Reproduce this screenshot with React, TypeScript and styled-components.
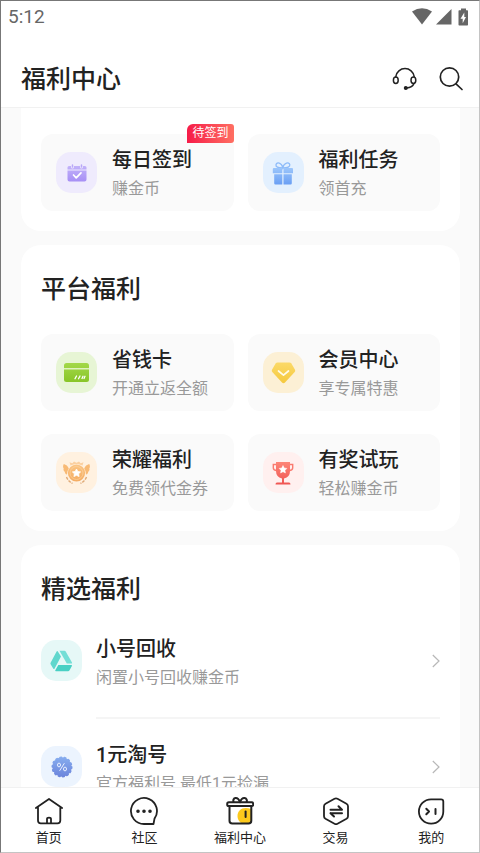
import React from "react";
import styled, { createGlobalStyle } from "styled-components";

const GlobalStyle = createGlobalStyle`
  *, *::before, *::after { box-sizing: border-box; }
  body {
    margin: 0;
    background: #fafafa;
    color: #222;
    font-family: Roboto, "Noto Sans CJK SC", sans-serif;
  }
  button { font: inherit; color: inherit; background: none; border: 0; padding: 0; text-align: left; cursor: pointer; }
  a { color: inherit; text-decoration: none; }
  h1, h2, p, ul { margin: 0; padding: 0; }
  svg { display: block; flex: none; }
`;

const Screen = styled.div`
  height: 100vh;
  display: flex;
  flex-direction: column;
  border: 1px solid #777;
  border-right-color: #c4c4c4;
  border-bottom-color: #c4c4c4;
`;

const StatusBar = styled.div`
  display: flex;
  align-items: center;
  justify-content: space-between;
  height: 31px;
  padding: 0 7px;
  background: #fff;
  color: #666;
  font-size: 19px;
`;

const StatusIcons = styled.div`
  display: flex;
  align-items: center;
  gap: 4px;
`;

const Header = styled.header`
  display: flex;
  align-items: center;
  justify-content: space-between;
  height: 76px;
  padding: 18px 15px 0 20px;
  background: #fff;
  border-bottom: 1px solid #f1f1f1;
`;

const PageTitle = styled.h1`
  padding-top: 2px;
  font-size: 25px;
  line-height: 36px;
  font-weight: 500;
`;

const HeaderActions = styled.div`
  display: flex;
  gap: 20px;
`;

const Content = styled.main`
  flex: 1;
  min-height: 0;
  overflow-y: auto;
  scrollbar-width: none;
  display: flex;
  flex-direction: column;
  gap: 14px;
  padding: 0 19px 0 20px;
`;

const Card = styled.section<{ $continued?: boolean }>`
  flex: none;
  padding: 26px 20px 20px;
  background: #fff;
  border-radius: ${(p) => (p.$continued ? "0 0 20px 20px" : "20px")};
`;

const SectionTitle = styled.h2`
  margin-bottom: 25px;
  font-size: 25px;
  line-height: 38px;
  font-weight: 500;
`;

const TileGrid = styled.div`
  display: grid;
  grid-template-columns: 1fr 1fr;
  gap: 23px 14px;
`;

const Label = styled.span`
  display: flex;
  flex-direction: column;
  flex: 1;
  min-width: 0;
  white-space: nowrap;
`;

const Tile = styled.button`
  position: relative;
  display: flex;
  align-items: center;
  gap: 15px;
  height: 77px;
  padding: 0 15px;
  background: #fafafa;
  border-radius: 12px;

  ${Label} {
    padding-top: 3px;
  }
`;

const Badge = styled.span`
  position: absolute;
  top: -10px;
  right: 0;
  padding: 0 5px;
  font-size: 12px;
  line-height: 19px;
  color: #fff;
  background: linear-gradient(90deg, #f61c48, #ff6f62);
  border-radius: 6px 3px 3px 0;
`;

const IconBox = styled.span<{ $tint: string }>`
  display: flex;
  align-items: center;
  justify-content: center;
  flex: none;
  width: 41px;
  height: 41px;
  border-radius: 15px;
  background: ${(p) => p.$tint};
`;

const Name = styled.span`
  font-size: 20px;
  line-height: 28px;
  font-weight: 500;
`;

const Note = styled.span`
  font-size: 16px;
  line-height: 29px;
  color: #999;
`;

const List = styled.ul`
  list-style: none;
`;

const Row = styled.button`
  display: flex;
  align-items: flex-start;
  gap: 14px;
  width: 100%;
  height: 106px;
`;

const RowBody = styled.span`
  display: flex;
  align-items: flex-start;
  flex: 1;
  height: 85px;
  padding-top: 1px;
  border-bottom: 2px solid #f5f5f5;
`;

const RowIcon = styled.span`
  padding-top: 6px;
`;

const RowArrow = styled.span`
  padding-top: 19px;
`;

const NavBar = styled.nav`
  display: flex;
  height: 65px;
  padding-top: 9px;
  background: #fff;
  border-top: 1px solid #f1f1f1;
`;

const NavLink = styled.a`
  display: flex;
  flex-direction: column;
  align-items: center;
  flex: 1;
  gap: 3px;
  font-size: 13px;
  line-height: 20px;
`;

const CalendarIcon = () => (
  <svg width="20" height="18" viewBox="0 0 20 18">
    <defs>
      <linearGradient id="calendar" x2="0" y2="1"><stop stopColor="#c2b2fa" /><stop offset="1" stopColor="#a78ff5" /></linearGradient>
    </defs>
    <path d="M2 2H18Q19.500 2 19.500 3.500V5.500H.5V3.500Q.5 2 2 2ZM.5 6.500H19.500V15.500Q19.500 17.500 17.500 17.500H2.500Q.5 17.500.5 15.500Z" fill="url(#calendar)" />
    <path d="M5.500 1V3M14.500 1V3" stroke="#efebfd" strokeWidth="3" strokeLinecap="round" />
    <path d="M5.500 1V3M14.500 1V3" stroke="#b9a7f8" strokeWidth="1.500" strokeLinecap="round" />
    <path d="M6.500 11L9.200 13.800L14 8.800" fill="none" stroke="#fff" strokeWidth="1.700" strokeLinecap="round" strokeLinejoin="round" />
  </svg>
);

const PresentIcon = () => (
  <svg width="22" height="24" viewBox="0 0 22 24">
    <defs>
      <linearGradient id="present" x2="0" y2="1"><stop stopColor="#9cc6fb" /><stop offset="1" stopColor="#6a9ff4" /></linearGradient>
    </defs>
    <path d="M10.500 7C6 7 3.500 5.800 4 3.600C4.800.8 9.500 1.400 10.800 6.500C12.200 1.400 17 .8 17.800 3.600C18.200 5.800 15.500 7 11 7" fill="none" stroke="#8dbbf9" strokeWidth="1.300" />
    <path d="M1.800 7H10.300V12.300H.8V8Q.8 7 1.800 7ZM11.500 7H20Q21 7 21 8V12.300H11.500ZM2.200 13.300H10.300V23.500H3.400Q2.200 23.500 2.200 22.300ZM11.500 13.300H19.800V22.300Q19.800 23.500 18.600 23.500H11.500Z" fill="url(#present)" />
  </svg>
);

const CardIcon = () => (
  <svg width="25" height="19" viewBox="0 0 25 19">
    <defs>
      <linearGradient id="card" x2="0" y2="1"><stop stopColor="#a3d84a" /><stop offset="1" stopColor="#88c527" /></linearGradient>
    </defs>
    <rect width="25" height="19" rx="2.500" fill="url(#card)" />
    <path d="M0 5.800H25" stroke="#f0fadf" strokeWidth="1.200" />
    <path d="M11 15.800L12.500 13M14.500 15.800L16 13M18 15.500L19 13.300M20 15.500L21 13.300" stroke="#fff" strokeWidth="1.300" strokeLinecap="round" />
  </svg>
);

const DiamondIcon = () => (
  <svg width="25" height="22" viewBox="0 0 25 22">
    <defs>
      <linearGradient id="diamond" x2="0" y2="1"><stop stopColor="#fbd968" /><stop offset="1" stopColor="#f5c93e" /></linearGradient>
    </defs>
    <path d="M6.500 .5H18.500Q19.700 .5 20.400 1.400L24 7.800Q24.600 9 23.700 10L14 20.500Q12.500 22 11 20.500L1.300 10Q.4 9 1 7.800L4.600 1.400Q5.300 .5 6.500 .5Z" fill="url(#diamond)" />
    <path d="M7.500 9L12.500 13.200L17.500 9" fill="none" stroke="#fffbe9" strokeWidth="1.700" strokeLinecap="round" strokeLinejoin="round" />
  </svg>
);

const HonorIcon = () => (
  <svg width="29" height="24" viewBox="0 0 29 24">
    <defs>
      <linearGradient id="honor" x2="0" y2="1"><stop stopColor="#fbc584" /><stop offset="1" stopColor="#f4ac62" /></linearGradient>
    </defs>
    <path d="M1.800 3C4 3.600 6 5.200 6.800 7.500Q5 10 5 13.500C3.500 13 2.800 12 2.900 10.900C1.500 10 1.200 8.800 1.700 7.600C.8 6 .9 4.500 1.800 3ZM27.200 3C25 3.600 23 5.200 22.200 7.500Q24 10 24 13.500C25.500 13 26.200 12 26.100 10.900C27.500 10 27.800 8.800 27.300 7.600C28.200 6 28.100 4.500 27.200 3Z" fill="#f8ba75" />
    <path d="M7.500 1.200L10.300 2.300L12 .5L14.500 1.800L17 .5L18.700 2.300L21.500 1.200L20.500 4.500Q14.500 1.300 8.500 4.500Z" fill="#fbd0a0" />
    <circle cx="14.500" cy="12" r="8.600" fill="url(#honor)" />
    <circle cx="14.500" cy="12" r="6.500" fill="none" stroke="#fbd3a0" strokeWidth=".7" />
    <path d="M14.500 8L15.800 10.500L18.600 10.900L16.600 12.800L17.100 15.600L14.500 14.300L11.900 15.600L12.400 12.800L10.400 10.900L13.200 10.500Z" fill="#fff" stroke="#fff" strokeWidth=".8" strokeLinejoin="round" />
    <path d="M4.500 16Q6 20 10.500 22.500M24.500 16Q23 20 18.500 22.500" fill="none" stroke="#e0ab78" strokeWidth="1.400" strokeDasharray="3 1" />
  </svg>
);

const TrophyIcon = () => (
  <svg width="22" height="24" viewBox="0 0 22 24">
    <defs>
      <linearGradient id="trophy" x2="0" y2="1"><stop stopColor="#fd8577" /><stop offset="1" stopColor="#ef5552" /></linearGradient>
    </defs>
    <path d="M4 3.500H1.300V7Q1.300 9.300 4.800 9.500M18 3.500H20.700V7Q20.700 9.300 17.200 9.500" fill="none" stroke="#fa7b70" strokeWidth="1.400" />
    <path d="M4 1H18V10Q18 16 12 17.500V21.500H17Q18.500 21.500 18.500 23.500H3.500Q3.500 21.500 5 21.500H10V17.500Q4 16 4 10Z" fill="url(#trophy)" />
    <path d="M11 4.500L12.200 7L14.900 7.400L13 9.300L13.400 12L11 10.700L8.600 12L9 9.300L7.100 7.400L9.800 7Z" fill="#fff" stroke="#fff" strokeWidth=".5" strokeLinejoin="round" />
  </svg>
);

const RecycleIcon = () => (
  <svg width="23" height="22" viewBox="0 0 23 22">
    <path d="M7.700 1.300L11 6.500L4.500 18.800Q3.800 19.500 3.200 18.500L.6 14.300Q.2 13.600.6 12.800L6.600 1.600Q7.100.6 7.700 1.300Z" fill="#60d7cd" />
    <path d="M9.500 .7H14.500Q15.300.7 15.700 1.400L22 12.500Q22.500 13.600 21.500 13.600H16.800Z" fill="#74ded6" />
    <path d="M8.300 15H21.200Q22.400 15 21.900 16L19.400 20.400Q19 21.200 18.100 21.200H6Q4.800 21.200 5.300 20.200Z" fill="#48d0c4" />
  </svg>
);

const PercentIcon = () => (
  <svg width="22" height="22" viewBox="0 0 22 22">
    <defs>
      <linearGradient id="percent" x2="0" y2="1"><stop stopColor="#86acee" /><stop offset="1" stopColor="#6c85dc" /></linearGradient>
    </defs>
    <circle cx="11" cy="11" r="9.700" fill="url(#percent)" />
    <circle cx="11" cy="11" r="9.500" fill="none" stroke="url(#percent)" strokeWidth="2" strokeLinecap="round" strokeDasharray="1.200 3.060" />
    <path d="M8.800 14.500L13.200 7.500" stroke="#e9f0ff" strokeWidth="1" strokeLinecap="round" />
    <ellipse cx="8" cy="9" rx="1.500" ry="1.900" fill="none" stroke="#e9f0ff" />
    <ellipse cx="14" cy="13" rx="1.500" ry="1.900" fill="none" stroke="#e9f0ff" />
  </svg>
);

const ChevronIcon = () => (
  <svg width="8" height="14" viewBox="0 0 8 14" fill="none" stroke="#b8b8b8" strokeWidth="1.200">
    <path d="M.8 1L7 7L.8 13" />
  </svg>
);

const stroke = { fill: "none", stroke: "#222", strokeWidth: 1.8, strokeLinecap: "round", strokeLinejoin: "round" } as const;

const HeadsetIcon = () => (
  <svg width="26" height="26" viewBox="0 0 26 26" {...stroke} strokeWidth="1.500">
    <path d="M3.800 11V10.500A9.300 9.300 0 0 1 22.200 10.500V11" />
    <ellipse cx="3.800" cy="14.300" rx="2.400" ry="3.200" />
    <ellipse cx="21.400" cy="14.300" rx="2.400" ry="3.200" />
    <path d="M22 17.500Q20.500 21.600 14.500 22" />
    <circle cx="13.800" cy="22" r="1.300" fill="#222" />
  </svg>
);

const SearchIcon = () => (
  <svg width="26" height="26" viewBox="0 0 26 26" {...stroke} strokeWidth="1.700">
    <circle cx="11.500" cy="11" r="9.200" />
    <path d="M18 17.800L24 23.500" />
  </svg>
);

const HomeIcon = () => (
  <svg width="28" height="28" viewBox="0 0 28 28" {...stroke}>
    <path d="M.9 11L14 2L27.100 11M3 10V23.500Q3 26.300 5.800 26.300H22.500Q25.300 26.300 25.300 23.500V10" />
    <path d="M12 26V22Q12 20.600 14 20.600Q16 20.600 16 22V26" />
  </svg>
);

const ChatIcon = () => (
  <svg width="28" height="28" viewBox="0 0 28 28" {...stroke}>
    <path d="M14 27A13 13 0 1 1 24.500 21.600L23.500 27Z" />
    <path d="M8 14.300H8.010M14 14.300H14.010M20 14.300H20.010" strokeWidth="3.600" />
  </svg>
);

const GiftIcon = () => (
  <svg width="28" height="28" viewBox="0 0 28 28" {...stroke}>
    <path d="M25 12C17 9 11.500 13 11.500 19C11.500 23 14 26 17 26.500H22Q25 26.500 25 23.500Z" fill="#fcc91c" stroke="none" />
    <path d="M3.500 9V23.800Q3.500 26.600 6.300 26.600H22.500Q25.300 26.600 25.300 23.800V9" strokeWidth="2" />
    <rect x="1.200" y="5.300" width="26" height="3.700" rx="1.600" strokeWidth="2" />
    <path d="M14 5.200C13 2.500 11.500 .9 9.500 1.100C7.500 1.300 7 3.300 7.500 5M14 5.200C15 2.500 16.500 .9 18.500 1.100C20.500 1.300 21.300 3.300 20.700 5" strokeWidth="2" />
    <path d="M19.600 14.500V20" strokeWidth="2" />
  </svg>
);

const TradeIcon = () => (
  <svg width="28" height="28" viewBox="0 0 28 28" {...stroke}>
    <path d="M12.500 1.700Q14 .9 15.500 1.700L24.500 6.700Q26 7.600 26 9.300V19.200Q26 20.900 24.500 21.800L15.500 26.800Q14 27.600 12.500 26.800L3.500 21.800Q2 20.900 2 19.200V9.300Q2 7.600 3.500 6.700Z" />
    <path d="M20 12.800H8.500M16.500 9.300L20 12.800M8.500 16.200H20M8.500 16.200L12 19.500" strokeWidth="2" />
  </svg>
);

const ProfileIcon = () => (
  <svg width="28" height="28" viewBox="0 0 28 28" {...stroke}>
    <path d="M14 2.300H24Q26.300 2.300 26.300 4.600V14.500A12.200 12.200 0 1 1 14 2.300Z" />
    <path d="M9.300 11.700L12 14.500L9.300 17.300M18.500 12V17" strokeWidth="2" />
  </svg>
);

const WifiIcon = () => (
  <svg width="20" height="17" viewBox="0 0 20 17"><path d="M0 3.500Q10-3.200 20 3.500L10 16.500Z" fill="#666" /></svg>
);

const SignalIcon = () => (
  <svg width="16" height="17" viewBox="0 0 16 17"><path d="M15.500 1V16.500H0Z" fill="#666" /></svg>
);

const BatteryIcon = () => (
  <svg width="16" height="18" viewBox="2 0 16 18">
    <path d="M7 .5H12V2.300H13.300Q14 2.300 14 3V16.800Q14 17.500 13.300 17.500H5.200Q4.500 17.500 4.500 16.800V3Q4.500 2.300 5.200 2.300H7Z" fill="#666" />
    <path d="M10.300 4.500L6.500 10.800H8.700V15.300L12 8.900H10.300Z" fill="#fff" />
  </svg>
);

type Item = { name: string; note: string; tint: string; icon: React.ReactNode; badge?: string };

const daily: Item[] = [
  { name: "每日签到", note: "赚金币", tint: "#efebfd", icon: <CalendarIcon />, badge: "待签到" },
  { name: "福利任务", note: "领首充", tint: "#e3f0fe", icon: <PresentIcon /> },
];

const platform: Item[] = [
  { name: "省钱卡", note: "开通立返全额", tint: "#e7f5d5", icon: <CardIcon /> },
  { name: "会员中心", note: "享专属特惠", tint: "#fcf0d5", icon: <DiamondIcon /> },
  { name: "荣耀福利", note: "免费领代金券", tint: "#fff1e0", icon: <HonorIcon /> },
  { name: "有奖试玩", note: "轻松赚金币", tint: "#fff0ef", icon: <TrophyIcon /> },
];

const featured: Item[] = [
  { name: "小号回收", note: "闲置小号回收赚金币", tint: "#e6f8f7", icon: <RecycleIcon /> },
  { name: "1元淘号", note: "官方福利号 最低1元捡漏", tint: "#ecf4fe", icon: <PercentIcon /> },
];

const tabs = [
  { name: "首页", icon: <HomeIcon /> },
  { name: "社区", icon: <ChatIcon /> },
  { name: "福利中心", icon: <GiftIcon />, current: true },
  { name: "交易", icon: <TradeIcon /> },
  { name: "我的", icon: <ProfileIcon /> },
];

const Tiles = ({ items }: { items: Item[] }) => (
  <TileGrid>
    {items.map((item) => (
      <Tile key={item.name} type="button">
        <IconBox $tint={item.tint}>{item.icon}</IconBox>
        <Label>
          <Name>{item.name}</Name>
          <Note>{item.note}</Note>
        </Label>
        {item.badge && <Badge>{item.badge}</Badge>}
      </Tile>
    ))}
  </TileGrid>
);

export default function App() {
  return (
    <>
      <GlobalStyle />
      <Screen>
        <StatusBar>
          <span>5:12</span>
          <StatusIcons>
            <WifiIcon />
            <SignalIcon />
            <BatteryIcon />
          </StatusIcons>
        </StatusBar>
        <Header>
          <PageTitle>福利中心</PageTitle>
          <HeaderActions>
            <button type="button" aria-label="客服"><HeadsetIcon /></button>
            <button type="button" aria-label="搜索"><SearchIcon /></button>
          </HeaderActions>
        </Header>
        <Content>
          <Card $continued>
            <Tiles items={daily} />
          </Card>
          <Card>
            <SectionTitle>平台福利</SectionTitle>
            <Tiles items={platform} />
          </Card>
          <Card>
            <SectionTitle>精选福利</SectionTitle>
            <List>
              {featured.map((item) => (
                <li key={item.name}>
                  <Row type="button">
                    <RowIcon>
                      <IconBox $tint={item.tint}>{item.icon}</IconBox>
                    </RowIcon>
                    <RowBody>
                      <Label>
                        <Name>{item.name}</Name>
                        <Note>{item.note}</Note>
                      </Label>
                      <RowArrow>
                        <ChevronIcon />
                      </RowArrow>
                    </RowBody>
                  </Row>
                </li>
              ))}
            </List>
          </Card>
        </Content>
        <NavBar>
          {tabs.map((tab) => (
            <NavLink key={tab.name} href="#" aria-current={tab.current ? "page" : undefined}>
              {tab.icon}
              {tab.name}
            </NavLink>
          ))}
        </NavBar>
      </Screen>
    </>
  );
}
